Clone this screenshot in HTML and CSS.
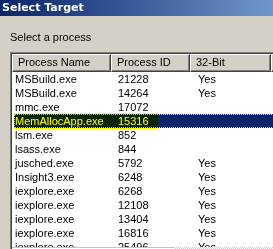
FILE: index.html
```html
<!DOCTYPE html>
<html lang="en">
<head>
    <meta charset="UTF-8">
    <title>Select Target</title>
    <link rel="stylesheet" href="styles.css">
</head>
<body>
    <div class="titlebar">Select Target</div>

    <div class="dialog">
        <div class="label">Select a process</div>

        <div class="listbox">
            <div class="header">
                <div class="head-cell">Process Name</div>
                <div class="head-cell">Process ID</div>
                <div class="head-cell">32-Bit</div>
                <div class="head-cell"></div>
            </div>

            <div class="rows">
                <div class="row"><span class="c-name">MSBuild.exe</span><span class="c-id">21228</span><span class="c-bit">Yes</span></div>
                <div class="row"><span class="c-name">MSBuild.exe</span><span class="c-id">14264</span><span class="c-bit">Yes</span></div>
                <div class="row"><span class="c-name">mmc.exe</span><span class="c-id">17072</span><span class="c-bit"></span></div>
                <div class="row selected">
                    <span class="c-name">MemAllocApp.exe</span><span class="c-id">15316</span><span class="c-bit"></span>
                    <!-- highlighter mark drawn over the selection -->
                    <div class="marker"></div>
                </div>
                <div class="row"><span class="c-name">lsm.exe</span><span class="c-id">852</span><span class="c-bit"></span></div>
                <div class="row"><span class="c-name">lsass.exe</span><span class="c-id">844</span><span class="c-bit"></span></div>
                <div class="row"><span class="c-name">jusched.exe</span><span class="c-id">5792</span><span class="c-bit">Yes</span></div>
                <div class="row"><span class="c-name">Insight3.exe</span><span class="c-id">6248</span><span class="c-bit">Yes</span></div>
                <div class="row"><span class="c-name">iexplore.exe</span><span class="c-id">6268</span><span class="c-bit">Yes</span></div>
                <div class="row"><span class="c-name">iexplore.exe</span><span class="c-id">12108</span><span class="c-bit">Yes</span></div>
                <div class="row"><span class="c-name">iexplore.exe</span><span class="c-id">13404</span><span class="c-bit">Yes</span></div>
                <div class="row"><span class="c-name">iexplore.exe</span><span class="c-id">16816</span><span class="c-bit">Yes</span></div>
                <div class="row"><span class="c-name">iexplore.exe</span><span class="c-id">25496</span><span class="c-bit">Yes</span></div>
            </div>

            <div class="hscroll">
                <div class="thumb"></div>
                <div class="track"></div>
            </div>
        </div>
    </div>
</body>
</html>
```

FILE: styles.css
```css
body {
    margin: 0;
    width: 273px;
    height: 249px;
    overflow: hidden;
    background-color: #d4d0c8;
    font-family: "Liberation Sans", Arial, sans-serif;
    font-size: 11px;
    color: #000;
}
.titlebar {
    height: 16px;
    line-height: 15px;
    padding-left: 2px;
    background: linear-gradient(to right, #0a246a 0%, #3a5c9a 50%, #7097c9 100%);
    color: #fff;
    font-family: "DejaVu Sans", sans-serif;
    font-weight: bold;
    font-size: 11px;
}
.dialog {
    padding: 15px 0 0 10px;
}
.label {
    height: 13px;
    line-height: 13px;
}
.listbox {
    margin-top: 8px;
    width: 280px;
    border-top: 1px solid #808080;
    border-left: 1px solid #808080;
    background-color: #fff;
    padding: 1px 0 0 1px;
    box-shadow: inset 1px 1px 0 #404040;
}
.header {
    display: grid;
    grid-template-columns: 99px 79px 81px 1fr;
    height: 18px;
}
.head-cell {
    background-color: #d4d0c8;
    border-top: 1px solid #fff;
    border-left: 1px solid #fff;
    border-right: 1px solid #404040;
    border-bottom: 1px solid #404040;
    box-shadow: inset -1px -1px 0 #808080;
    padding-left: 5px;
    line-height: 15px;
    white-space: nowrap;
    overflow: hidden;
}
.rows {
    height: 175px;
    overflow: hidden;
}
.row {
    display: grid;
    grid-template-columns: 99px 79px 81px 1fr;
    height: 14px;
    line-height: 14px;
    white-space: nowrap;
}
.c-name {
    padding-left: 3px;
}
.c-id {
    padding-left: 7px;
}
.c-bit {
    padding-left: 8px;
}
.row.selected {
    position: relative;
    margin-left: 2px;
    grid-template-columns: 97px 79px 81px 1fr;
    background-color: #0a246a;
    color: #fff;
    outline: 1px dotted #d8d0a8;
    outline-offset: -1px;
}
.row.selected .c-name {
    padding-left: 1px;
}
.marker {
    position: absolute;
    left: 0;
    top: -1px;
    width: 144px;
    height: 16px;
    background-color: #ffff00;
    mix-blend-mode: multiply;
}
.hscroll {
    display: flex;
    height: 17px;
}
.thumb {
    width: 163px;
    background-color: #d4d0c8;
    border-top: 1px solid #c8c4bc;
    box-shadow: inset 0 1px 0 #fff;
}
.track {
    flex: 1;
    background-color: #fff;
    background-image: repeating-conic-gradient(#d4d0c8 0 25%, #fff 0 50%);
    background-size: 2px 2px;
}
```
